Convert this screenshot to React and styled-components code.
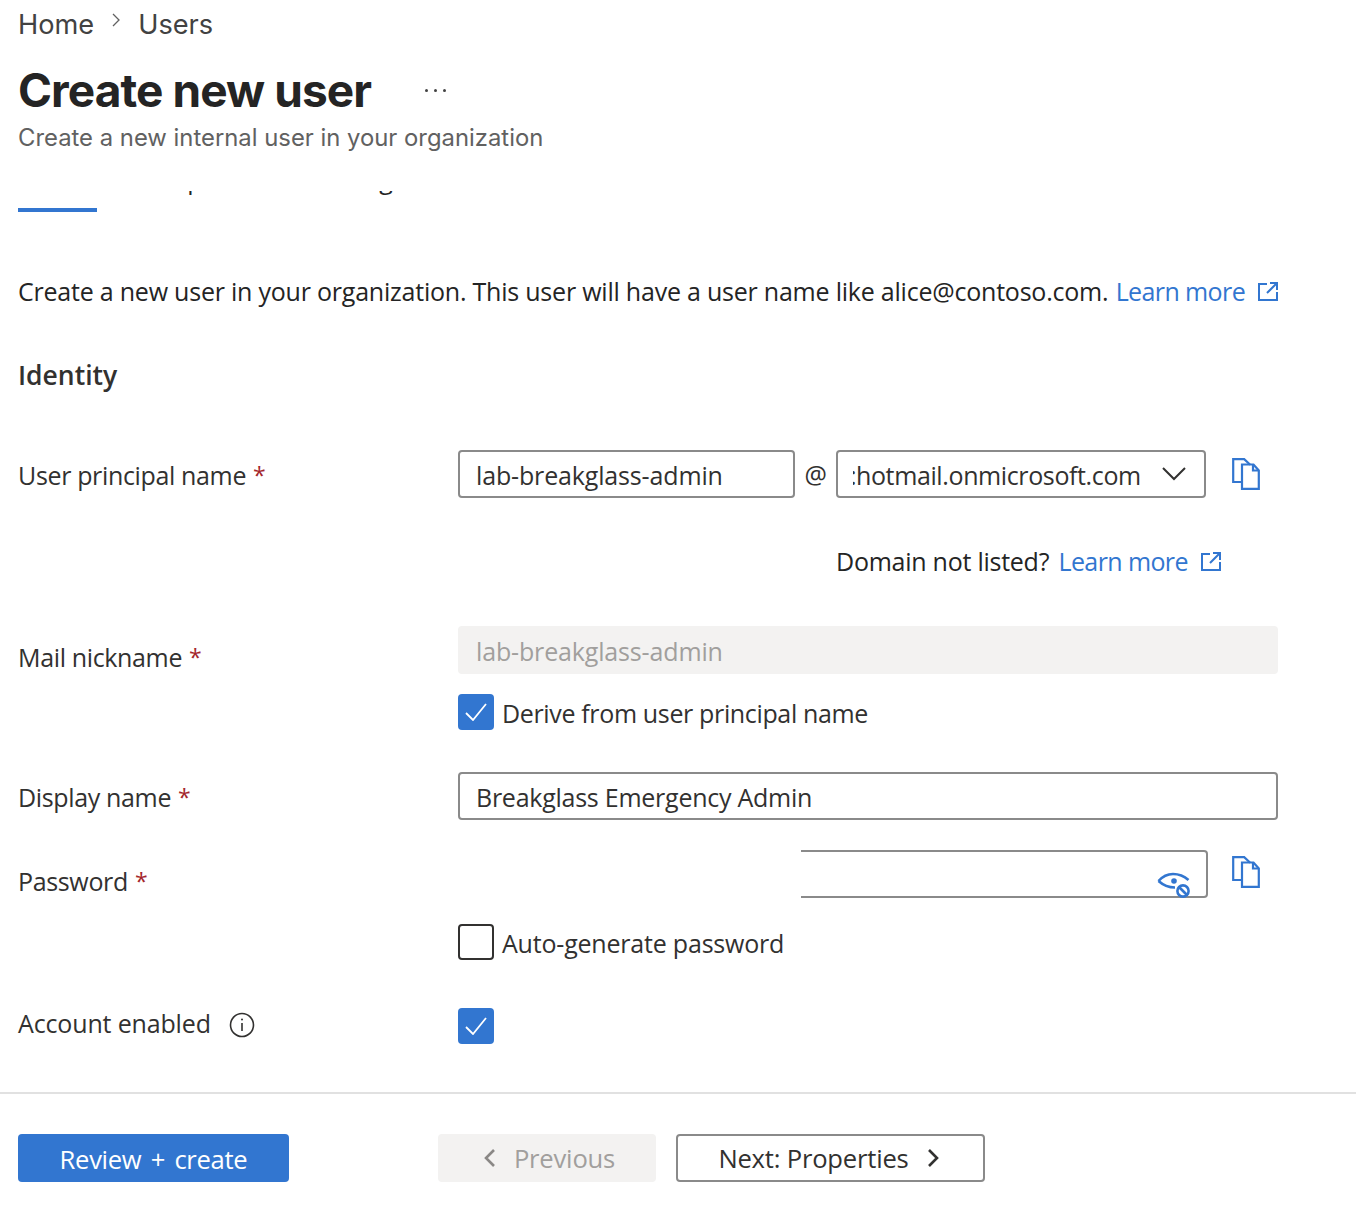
import React from "react";
import styled, { createGlobalStyle } from "styled-components";

const blue = "#3276d0";
const bodyFont = `"Open Sans", "Noto Sans", sans-serif`;
const headFont = `Inter, "Liberation Sans", sans-serif`;

const GlobalStyle = createGlobalStyle`
  html, body {
    margin: 0;
    padding: 0;
    background: #fff;
  }
  #root {
    height: 1214px;
    overflow: hidden;
  }
`;

const Page = styled.div`
  font-family: ${bodyFont};
  font-size: 25px;
  letter-spacing: -0.25px;
  color: #323130;
`;

const Main = styled.main`
  padding-left: 18px;
  height: 1092px;
`;

const Crumbs = styled.nav`
  display: flex;
  align-items: center;
  height: 48px;
  gap: 17px;
  font-family: ${headFont};
  font-size: 27.2px;
  letter-spacing: 0;
  color: #424242;
`;

const CrumbSeparator = styled.svg`
  margin-top: -9px;
`;

const TitleRow = styled.div`
  display: flex;
  align-items: center;
  height: 52px;
  margin-top: 16px;
`;

const Title = styled.h1`
  margin: 0;
  font-family: ${headFont};
  font-size: 46px;
  font-weight: 700;
  letter-spacing: -0.92px;
  color: #242424;
`;

const More = styled.span`
  margin-left: 54px;
  display: flex;
  gap: 6px;
`;

const Dot = styled.i`
  width: 3px;
  height: 3px;
  border-radius: 50%;
  background: #424242;
`;

const Subtitle = styled.p`
  margin: 6px 0 0;
  height: 32px;
  line-height: 32px;
  font-family: ${headFont};
  font-size: 23.85px;
  letter-spacing: 0;
  color: #616161;
`;

const TabClip = styled.div`
  margin-top: 37px;
  height: 4px;
  overflow: hidden;
`;

const TabText = styled.div`
  display: flex;
  margin-top: -30px;
  height: 36px;
  line-height: 36px;
  white-space: nowrap;
  color: #242424;
`;

const TabLabel = styled.span`
  margin-left: ${(p) => p.$left}px;
`;

const ActiveBar = styled.div`
  margin-top: 13px;
  width: 79px;
  height: 4px;
  background: ${blue};
`;

const Intro = styled.p`
  margin: 61px 0 0;
  height: 36px;
  line-height: 36px;
  letter-spacing: -0.22px;
  white-space: nowrap;
  color: #242424;
`;

const Link = styled.a`
  color: ${blue};
  display: inline-flex;
  align-items: center;
  gap: 13px;
  margin-left: ${(p) => p.$left}px;
  letter-spacing: -0.6px;
`;

const SectionTitle = styled.h2`
  margin: 48px 0 0;
  height: 36px;
  line-height: 36px;
  font-size: 26.5px;
  font-weight: 600;
  letter-spacing: 0;
  color: #323130;
`;

const Row = styled.div`
  display: grid;
  grid-template-columns: 440px 820px;
  margin-top: ${(p) => p.$top}px;
`;

const Label = styled.label`
  box-sizing: border-box;
  display: flex;
  align-items: center;
  height: ${(p) => p.$height || 48}px;
  padding-top: ${(p) => p.$offset || 0}px;
  letter-spacing: ${(p) => p.$tracking ?? -0.35}px;
`;

const Required = styled.span`
  color: #a4262c;
  font-size: 23px;
  margin-left: 7px;
`;

const FieldLine = styled.div`
  display: flex;
  align-items: center;
  height: 48px;
`;

const Input = styled.div`
  box-sizing: border-box;
  width: ${(p) => p.$width || 820}px;
  height: 48px;
  padding-left: 16px;
  line-height: 46px;
  letter-spacing: ${(p) => p.$tracking ?? -0.25}px;
  border: 2px solid #8a8a8a;
  border-radius: 4px;
  color: #323130;
  white-space: nowrap;
  overflow: hidden;
`;

const DisabledInput = styled(Input)`
  border: 0;
  padding-left: 18px;
  line-height: 50px;
  background: #f3f2f1;
  color: #a19f9d;
`;

const At = styled.span`
  width: 41px;
  text-align: center;
`;

const Select = styled(Input)`
  display: flex;
  align-items: center;
  justify-content: space-between;
  padding: 0 18px 0 15px;
`;

const SelectValue = styled.span`
  display: flex;
  padding-top: 2px;
  letter-spacing: -0.38px;
`;

const Sliver = styled.span`
  display: block;
  width: 3px;
  overflow: hidden;
  text-indent: -3px;
`;

const CopyButton = styled.span`
  display: flex;
  margin-left: ${(p) => p.$left}px;
  margin-top: ${(p) => p.$top || 0}px;
`;

const Hint = styled.p`
  margin: 45px 0 0 818px;
  height: 36px;
  line-height: 36px;
  white-space: nowrap;
  color: #242424;
`;

const CheckLine = styled.div`
  display: flex;
  align-items: center;
  gap: 8px;
  height: 36px;
  margin-top: ${(p) => p.$top || 0}px;
`;

const CheckText = styled.span`
  padding-top: 2px;
  letter-spacing: ${(p) => p.$tracking}px;
`;

const Box = styled.span`
  box-sizing: border-box;
  display: flex;
  align-items: center;
  justify-content: center;
  width: 36px;
  height: 36px;
  border-radius: 4px;
  background: ${(p) => (p.$checked ? blue : "#fff")};
  border: ${(p) => (p.$checked ? "0" : "2px solid #323130")};
`;

const PasswordBox = styled.div`
  box-sizing: border-box;
  position: relative;
  width: 407px;
  height: 48px;
  margin-left: 343px;
  border: 2px solid #8a8a8a;
  border-left: 0;
  border-radius: 0 4px 4px 0;
`;

const EyeIcon = styled.svg`
  position: absolute;
  right: 15px;
  top: 20px;
`;

const InfoIcon = styled.svg`
  margin: 4px 0 0 18px;
`;

const Footer = styled.footer`
  display: flex;
  align-items: flex-start;
  border-top: 2px solid #e1e1e1;
  padding: 40px 0 0 18px;
`;

const Button = styled.button`
  box-sizing: border-box;
  display: flex;
  align-items: center;
  justify-content: center;
  gap: ${(p) => p.$gap || 0}px;
  height: 48px;
  width: ${(p) => p.$width}px;
  margin-left: ${(p) => p.$left || 0}px;
  padding: 0;
  border-radius: 4px;
  font-family: ${bodyFont};
  font-size: 25.6px;
  letter-spacing: -0.2px;
`;

const PrimaryButton = styled(Button)`
  background: ${blue};
  border: 0;
  color: #fff;
  padding-top: 3px;
  letter-spacing: -0.3px;
  word-spacing: 3px;
`;

const DisabledButton = styled(Button)`
  background: #f3f2f1;
  border: 0;
  color: #a19f9d;
  padding-left: 5px;
`;

const OutlineButton = styled(Button)`
  background: #fff;
  border: 2px solid #8a8a8a;
  color: #323130;
  padding-right: 4px;
`;

const ExternalIcon = () => (
  <svg width="20" height="19" viewBox="0 0 20 19" fill="none" stroke={blue} strokeWidth="2">
    <path d="M9 2H1v16h18v-8" />
    <path d="M9 11L18 2M12 1h7v7" />
  </svg>
);

const CopyIcon = () => (
  <svg width="28" height="32" viewBox="0 0 28 32" fill="none" stroke={blue} strokeWidth="2.2">
    <path d="M9 24H1.2V1.2h11l6 5.5" />
    <path d="M10 6.5h11.5l5.3 6V30.8H10z" />
    <path d="M21 6.5v6h6" />
  </svg>
);

const CheckMark = () => (
  <svg width="22" height="18" viewBox="0 0 22 18" fill="none" stroke="#fff" strokeWidth="1.8">
    <path d="M1 10l7 7L21 1" />
  </svg>
);

const ChevronDown = () => (
  <svg width="24" height="14" viewBox="0 0 24 14" fill="none" stroke="#323130" strokeWidth="2">
    <path d="M1 1l11 11L23 1" />
  </svg>
);

const ChevronSide = ({ left, color }) => (
  <svg width="12" height="20" viewBox="0 0 12 20" fill="none" stroke={color} strokeWidth="2.6">
    <path d={left ? "M10 2L2 10l8 8" : "M2 2l8 8-8 8"} />
  </svg>
);

export default function App() {
  return (
    <Page>
      <GlobalStyle />
      <Main>
        <Crumbs>
          <span>Home</span>
          <CrumbSeparator width="10" height="14" viewBox="0 0 10 14" fill="none" stroke="#616161" strokeWidth="1.3">
            <path d="M2 1l6 6-6 6" />
          </CrumbSeparator>
          <span>Users</span>
        </Crumbs>
        <TitleRow>
          <Title>Create new user</Title>
          <More>
            <Dot />
            <Dot />
            <Dot />
          </More>
        </TitleRow>
        <Subtitle>Create a new internal user in your organization</Subtitle>
        <TabClip>
          <TabText>
            <span>Basics</span>
            <TabLabel $left={59}>Properties</TabLabel>
            <TabLabel $left={68}>Assignments</TabLabel>
          </TabText>
        </TabClip>
        <ActiveBar />
        <Intro>
          Create a new user in your organization. This user will have a user name like alice@contoso.com.{" "}
          <Link $left={1}>
            Learn more
            <ExternalIcon />
          </Link>
        </Intro>
        <SectionTitle>Identity</SectionTitle>

        <Row $top={57}>
          <Label $offset={2}>
            User principal name<Required>*</Required>
          </Label>
          <FieldLine>
            <Input $width={337} $tracking={-0.15}>lab-breakglass-admin</Input>
            <At>@</At>
            <Select $width={370}>
              <SelectValue>
                <Sliver>:</Sliver>
                hotmail.onmicrosoft.com
              </SelectValue>
              <ChevronDown />
            </Select>
            <CopyButton $left={26}>
              <CopyIcon />
            </CopyButton>
          </FieldLine>
        </Row>
        <Hint>
          Domain not listed?{" "}
          <Link $left={3}>
            Learn more
            <ExternalIcon />
          </Link>
        </Hint>

        <Row $top={47}>
          <Label $offset={14}>
            Mail nickname<Required>*</Required>
          </Label>
          <div>
            <DisabledInput $tracking={-0.15}>lab-breakglass-admin</DisabledInput>
            <CheckLine $top={20}>
              <Box $checked>
                <CheckMark />
              </Box>
              <CheckText $tracking={-0.35}>Derive from user principal name</CheckText>
            </CheckLine>
          </div>
        </Row>

        <Row $top={42}>
          <Label $offset={2}>
            Display name<Required>*</Required>
          </Label>
          <Input>Breakglass Emergency Admin</Input>
        </Row>

        <Row $top={30}>
          <Label $offset={14}>
            Password<Required>*</Required>
          </Label>
          <div>
            <FieldLine>
              <PasswordBox>
                <EyeIcon width="34" height="26" viewBox="0 0 34 26" fill="none" stroke={blue} strokeWidth="2.6">
                  <path d="M1.5 9C6 4 11 2 16 2c6 0 11 2 15.5 6" />
                  <path d="M1.5 9c4.5 4 9.5 6.5 16.5 6.5" />
                  <circle cx="17" cy="9" r="2.8" fill={blue} stroke="none" />
                  <circle cx="26" cy="19" r="5.6" fill="#fff" />
                  <path d="M22.5 15.5l7 7" />
                </EyeIcon>
              </PasswordBox>
              <CopyButton $left={24} $top={-4}>
                <CopyIcon />
              </CopyButton>
            </FieldLine>
            <CheckLine $top={26}>
              <Box />
              <CheckText $tracking={-0.2}>Auto-generate password</CheckText>
            </CheckLine>
          </div>
        </Row>

        <Row $top={48}>
          <Label $height={30} $tracking={-0.15}>
            Account enabled
            <InfoIcon width="26" height="26" viewBox="0 0 26 26" fill="none" stroke="#323130" strokeWidth="1.6">
              <circle cx="13" cy="13" r="11.5" />
              <path d="M13 11v8" />
              <circle cx="13" cy="7.5" r="1" fill="#323130" stroke="none" />
            </InfoIcon>
          </Label>
          <CheckLine>
            <Box $checked>
              <CheckMark />
            </Box>
          </CheckLine>
        </Row>
      </Main>
      <Footer>
        <PrimaryButton $width={271}>Review + create</PrimaryButton>
        <DisabledButton $width={218} $left={149} $gap={18}>
          <ChevronSide left color="#8a8886" />
          Previous
        </DisabledButton>
        <OutlineButton $width={309} $left={20} $gap={18}>
          Next: Properties
          <ChevronSide color="#323130" />
        </OutlineButton>
      </Footer>
    </Page>
  );
}
